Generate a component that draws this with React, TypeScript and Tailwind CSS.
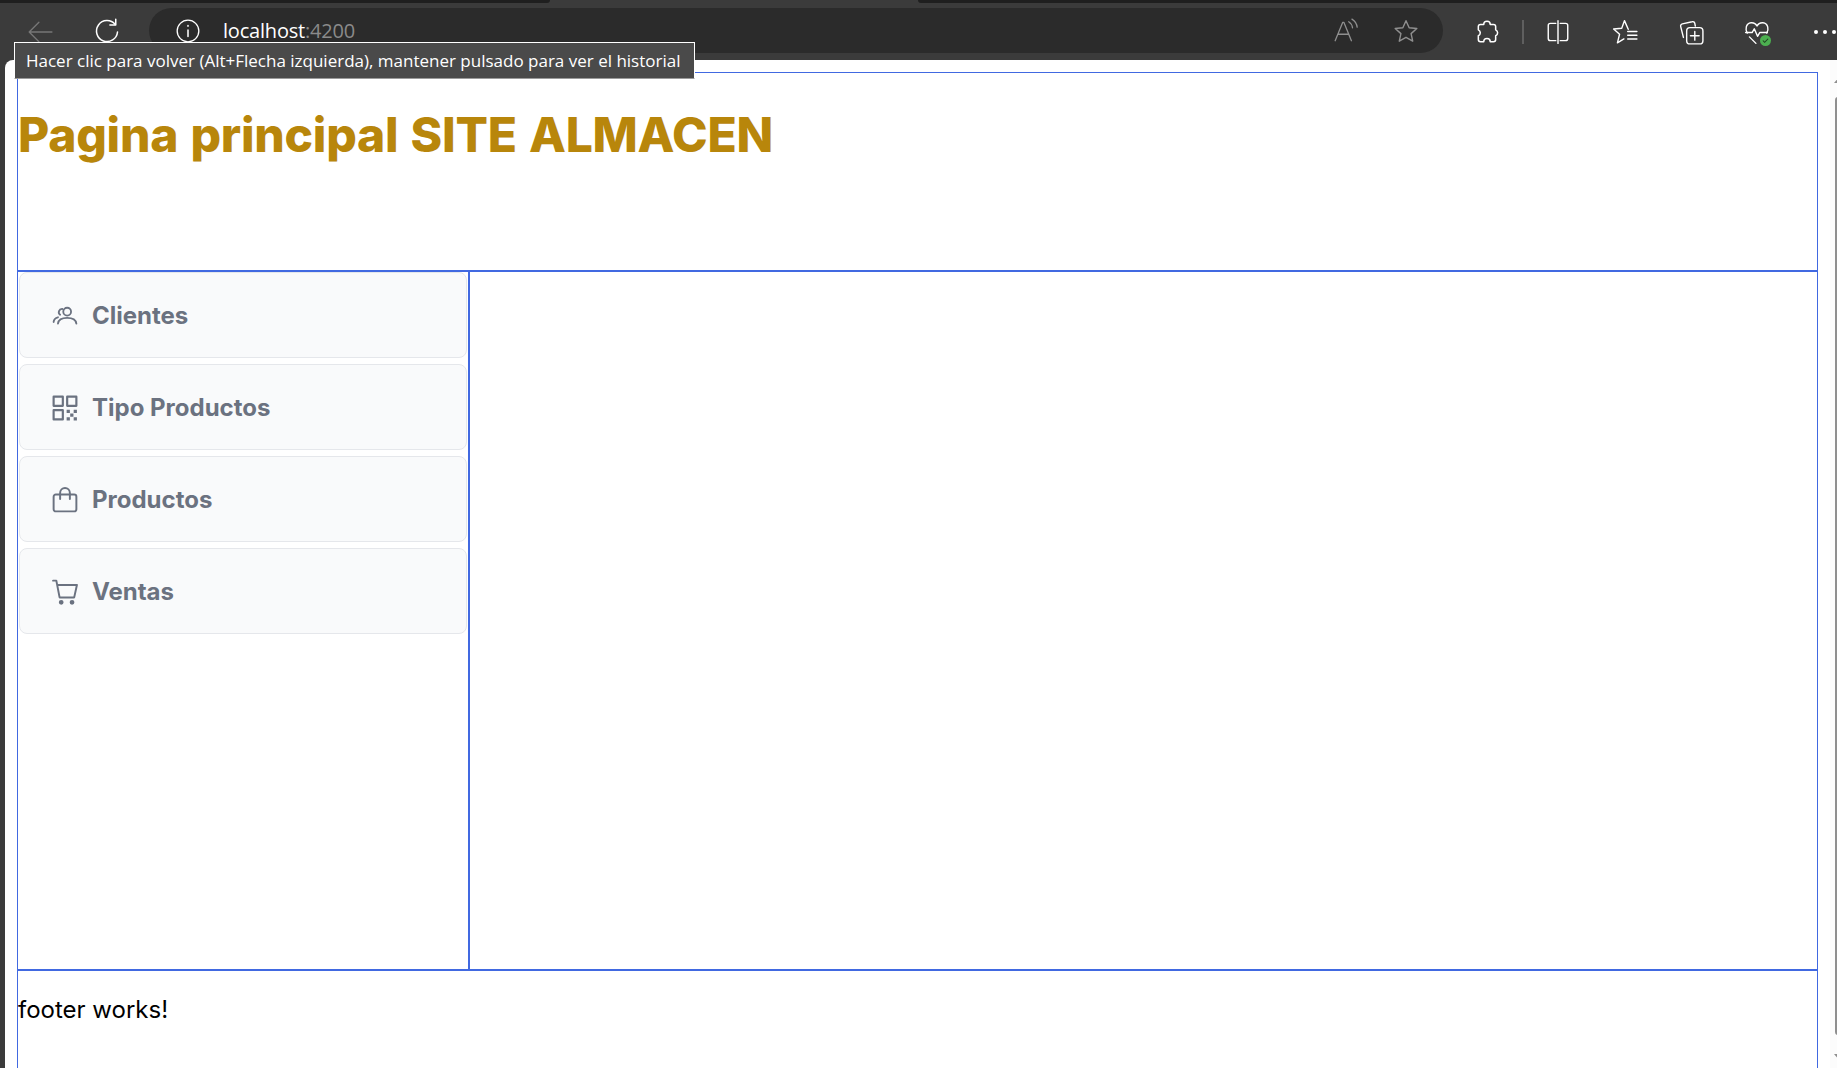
import type { ReactNode } from "react"

function Svg({ size = 26, sw = 1.5, children }: { size?: number; sw?: number; children: ReactNode }) {
  return (
    <svg
      width={size}
      height={size}
      viewBox="0 0 24 24"
      fill="none"
      stroke="currentColor"
      strokeWidth={sw}
      strokeLinecap="round"
      strokeLinejoin="round"
      className="shrink-0"
    >
      {children}
    </svg>
  )
}

const navItems = [
  {
    label: "Clientes",
    icon: (
      <Svg sw={1.7}>
        <circle cx="14" cy="8" r="3.6" />
        <path d="M5.5 19c.5-3.500 3.500-5.200 8.500-5.200s8 1.700 8.500 5.200" />
        <path d="M9.500 5.500a3 3 0 0 0-2 5.400" />
        <path d="M1.500 17.500c.2-2.200 1.500-3.700 4-4.300" />
      </Svg>
    ),
  },
  {
    label: "Tipo Productos",
    icon: (
      <Svg sw={2}>
        <rect x="1.500" y="1.500" width="8.500" height="8.500" />
        <rect x="14" y="1.500" width="8.500" height="8.500" />
        <rect x="1.500" y="14" width="8.500" height="8.500" />
        <path d="M13.500 13.500h3v3h-3zM20 13.500h3v3h-3zM16.800 17h3v3h-3zM13.500 20.500h3v3h-3zM20 20.500h3v3h-3z" fill="currentColor" stroke="none" />
      </Svg>
    ),
  },
  {
    label: "Productos",
    icon: (
      <Svg sw={1.8}>
        <rect x="1.500" y="7" width="21" height="15.500" rx="2" />
        <path d="M7.500 11V5.500a4.500 4.500 0 0 1 9 0V11" />
      </Svg>
    ),
  },
  {
    label: "Ventas",
    icon: (
      <Svg sw={1.8}>
        <path d="M1 1.500h3l3 15.500h13.500l2.500-11.500H4.800" />
        <circle cx="8.500" cy="21.500" r="1.300" fill="currentColor" />
        <circle cx="18.500" cy="21.500" r="1.300" fill="currentColor" />
      </Svg>
    ),
  },
]

function BrowserBar() {
  return (
    <div className="h-[60px] shrink-0 flex flex-col bg-[#3b3b3b] text-white">
      <div className="h-[3px] flex">
        <div className="w-[550px] bg-[#1f1f1f] rounded-br-md" />
        <div className="w-[368px]" />
        <div className="flex-1 bg-[#1f1f1f] rounded-bl-md" />
      </div>
      <div className="flex-1 flex items-center pl-[27px]">
        <span className="text-[#777777]">
          <Svg sw={1.2}>
            <path d="M23 12H2M11 3l-9 9 9 9" />
          </Svg>
        </span>
        <span className="ml-[40px]">
          <Svg size={28} sw={1.3}>
            <path d="M19 5.500A9 9 0 1 0 21 12" />
            <path d="M19.500 1v5h-5" />
          </Svg>
        </span>
        <div className="ml-[28px] w-[1294px] h-[45px] rounded-full bg-[#2b2b2b] flex items-center pl-[26px] pr-[24px] shrink-0 -translate-y-[1px]">
          <Svg sw={1.2}>
            <circle cx="12" cy="12" r="10" />
            <path d="M12 11v6M12 7v.5" strokeWidth="1.400" />
          </Svg>
          <span className="ml-[22px] text-[20px] font-['Open_Sans',sans-serif] tracking-[-0.2px]">
            localhost<span className="text-[#8a8a8a]">:4200</span>
          </span>
          <span className="ml-auto text-[#8f8f8f]">
            <Svg sw={1.2}>
              <path d="M2 21 9 4h1l7 17M4.500 15h10" />
              <path d="M14.500 3.500c2 1.200 3.200 3.200 3.500 5.500M17.500 1c2.800 1.800 4.500 4.500 4.800 7.500" />
            </Svg>
          </span>
          <span className="ml-[34px] text-[#8f8f8f]">
            <Svg sw={1.3}>
              <path d="m12 2.500 2.900 6.500 7.100.7-5.300 4.700 1.500 7-6.200-3.600-6.200 3.600 1.500-7L2 9.700 9.100 9z" />
            </Svg>
          </span>
        </div>
        <div className="flex items-center pl-[31px] shrink-0">
          <Svg sw={1.4}>
            <path d="M9 5a3 3 0 0 1 6 0h3a2 2 0 0 1 2 2v3a3 3 0 0 1 0 5.500V19a2 2 0 0 1-2 2h-3a3 3 0 0 0-6 0H6a2 2 0 0 1-2-2v-3.500a3 3 0 0 0 0-5.500V7a2 2 0 0 1 2-2z" />
          </Svg>
          <div className="ml-[22px] w-[2px] h-[24px] bg-[#5f5f5f]" />
          <div className="ml-[21px]">
            <Svg sw={1.3}>
              <path d="M10 4H5a2 2 0 0 0-2 2v12a2 2 0 0 0 2 2h5M14 4h5a2 2 0 0 1 2 2v12a2 2 0 0 1-2 2h-5M12 1.500v21" />
            </Svg>
          </div>
          <div className="ml-[41px]">
            <Svg sw={1.3}>
              <path d="M15 9.500 11.500 1.500 9 8.500l-7.500.8 5.500 4.700-2 8 6-3.600" />
              <path d="M14.500 11.500h8.500M14.500 15h8.500M14.500 18.500h8.500" />
            </Svg>
          </div>
          <div className="ml-[40px]">
            <Svg sw={1.3}>
              <path d="M5 17 2.500 7a2 2 0 0 1 1.500-2.500l9-2a2 2 0 0 1 2.500 1.500l.5 2.500" />
              <rect x="8" y="8" width="15" height="15" rx="3" />
              <path d="M15.500 11.500v8M11.500 15.500h8" />
            </Svg>
          </div>
          <div className="ml-[40px] relative">
            <Svg sw={1.3}>
              <path d="M3 13C1 10 1.500 4 6.500 3.500c2.500-.2 4.500 1 5.500 3 1-2 3-3.200 5.500-3C22.500 4 23 10 21 13" />
              <path d="M1.500 12.500h6l2-3.500 3 7 2-3.500h7M5 16.500l6 6" />
            </Svg>
            <span className="absolute right-[-1px] bottom-[-1px] w-[11px] h-[11px] rounded-full bg-[#4caf50] flex items-center justify-center">
              <svg width="7" height="7" viewBox="0 0 8 8" fill="none" stroke="#1f3d20" strokeWidth="1.200">
                <path d="m1 4 2 2 4-4" />
              </svg>
            </span>
          </div>
          <div className="ml-[44px] flex gap-[5px]">
            <span className="w-[4px] h-[4px] rounded-full bg-white" />
            <span className="w-[4px] h-[4px] rounded-full bg-white" />
            <span className="w-[4px] h-[4px] rounded-full bg-white" />
          </div>
        </div>
      </div>
    </div>
  )
}

// only the left part of the scrollbar is on screen, the rest is cut off
function Scrollbar() {
  return (
    <div className="w-[7px] shrink-0 overflow-hidden bg-[#fcfcfc] flex flex-col items-start pl-[4px] pt-[17px] pb-[8px]">
      <span className="shrink-0 w-0 h-0 border-x-[5px] border-x-transparent border-b-[6px] border-b-[#8f8f8f]" />
      <span className="mt-[14px] ml-[1px] w-[6px] flex-1 rounded-full bg-[#8f8f8f]" />
      <span className="mt-[19px] shrink-0 w-0 h-0 border-x-[5px] border-x-transparent border-t-[6px] border-t-[#8f8f8f]" />
    </div>
  )
}

export default function App() {
  return (
    <div className="relative h-screen overflow-hidden flex flex-col bg-[#3b3b3b] font-['Inter',sans-serif]">
      <BrowserBar />

      <div className="absolute left-[14px] top-[42px] z-10 w-[681px] h-[37px] flex items-center pl-[11px] bg-[#4a4a4a] border border-white border-b-[#9a9a9a] text-white text-[17px] font-['Open_Sans',sans-serif] whitespace-nowrap">
        Hacer clic para volver (Alt+Flecha izquierda), mantener pulsado para ver el historial
      </div>

      <div className="flex-1 min-h-0 ml-[5px] flex bg-white rounded-tl-lg overflow-hidden">
        <div className="flex-1 min-w-0 pl-[12px] pr-[12px] pt-[12px]">
          <div className="h-[1100px] border-x border-t border-[#4169e1] flex flex-col">
            <header className="h-[199px] shrink-0 border-b-2 border-[#4169e1]">
              <h1 className="mt-[33px] text-[48px] leading-[58px] font-extrabold tracking-[-0.25px] [word-spacing:2px] text-[#b8860b]">Pagina principal SITE ALMACEN</h1>
            </header>
            <div className="h-[697px] shrink-0 flex">
              <aside className="w-[452px] shrink-0 border-r-2 border-[#4169e1] flex flex-col gap-[6px] px-px">
                {navItems.map((item) => (
                  <div
                    key={item.label}
                    className="h-[86px] flex items-center gap-[14px] pl-[32px] pt-[1px] bg-[#f9fafb] border border-[#e5e7eb] rounded-lg text-[#6b7280]"
                  >
                    {item.icon}
                    <span className="text-[24px] font-bold">{item.label}</span>
                  </div>
                ))}
              </aside>
              <main className="flex-1" />
            </div>
            <footer className="flex-1 border-t-2 border-[#4169e1] pt-[23px]">
              <p className="text-[24px] leading-[32px] text-black">footer works!</p>
            </footer>
          </div>
        </div>
        <Scrollbar />
      </div>
    </div>
  )
}
